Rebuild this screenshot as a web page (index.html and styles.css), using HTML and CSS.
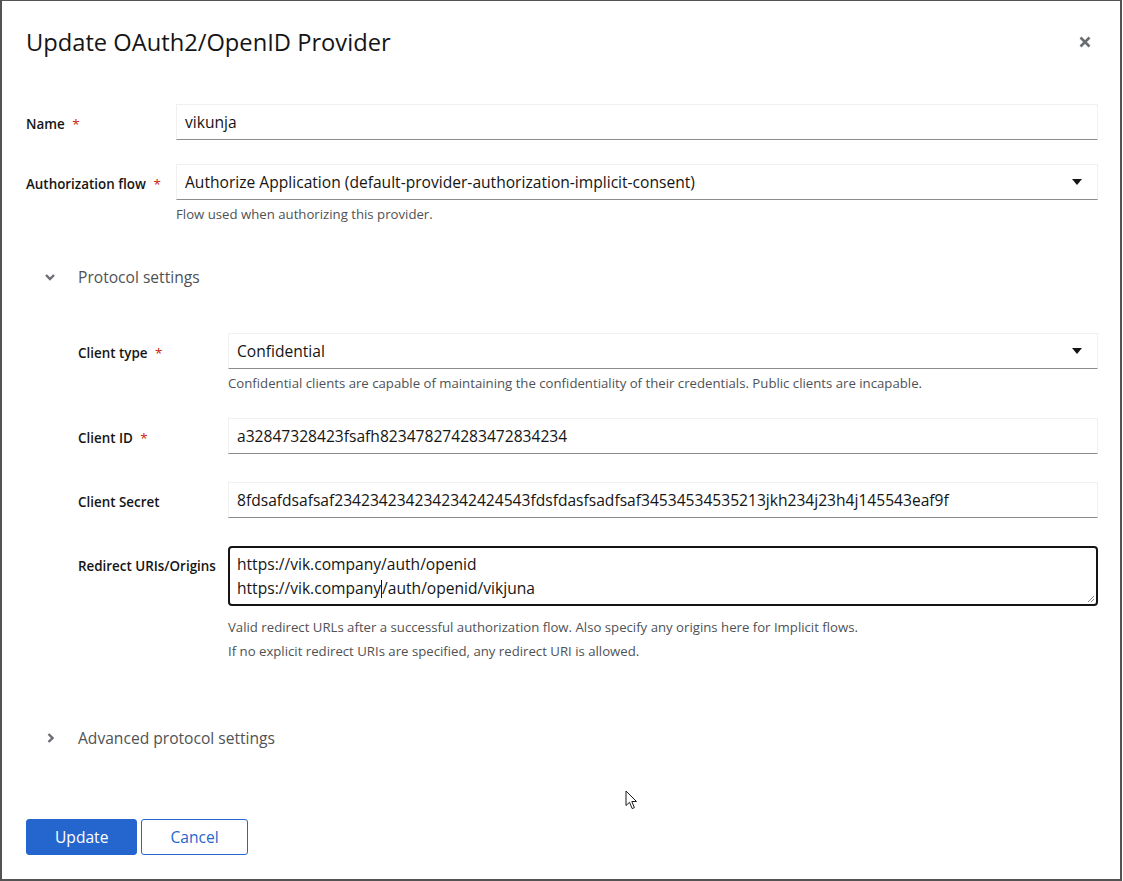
FILE: index.html
```html
<!DOCTYPE html>
<html lang="en">
<head>
<meta charset="utf-8">
<title>Update OAuth2/OpenID Provider</title>
<link rel="stylesheet" href="styles.css">
</head>
<body>
<div class="modal">
  <header class="modal-header">
    <h1 class="modal-title">Update OAuth2/OpenID Provider</h1>
    <button class="close" aria-label="Close">
      <svg width="12" height="12" viewBox="0 0 12 12"><path d="M1.5 1.5 L10.5 10.5 M10.5 1.5 L1.5 10.5" stroke="#6a6e73" stroke-width="2.6" stroke-linecap="butt"/></svg>
    </button>
  </header>

  <form class="form">
    <div class="group">
      <label class="label">Name <span class="req">*</span></label>
      <div class="control">
        <div class="input">vikunja</div>
      </div>
    </div>

    <div class="group">
      <label class="label">Authorization flow <span class="req">*</span></label>
      <div class="control">
        <div class="input select">
          <span>Authorize Application (default-provider-authorization-implicit-consent)</span>
          <svg class="caret" width="10" height="6" viewBox="0 0 10 6"><path d="M0 0 H10 L5 6 Z" fill="#151515"/></svg>
        </div>
        <p class="helper">Flow used when authorizing this provider.</p>
      </div>
    </div>

    <section class="expandable">
      <div class="toggle">
        <span class="toggle-icon">
          <svg width="10" height="7" viewBox="0 0 10 7"><path d="M1 1 L5 5 L9 1" fill="none" stroke="#6a6e73" stroke-width="2.4"/></svg>
        </span>
        <span class="toggle-text">Protocol settings</span>
      </div>
      <div class="expand-content">
        <div class="group">
          <label class="label">Client type <span class="req">*</span></label>
          <div class="control">
            <div class="input select">
              <span>Confidential</span>
              <svg class="caret" width="10" height="6" viewBox="0 0 10 6"><path d="M0 0 H10 L5 6 Z" fill="#151515"/></svg>
            </div>
            <p class="helper">Confidential clients are capable of maintaining the confidentiality of their credentials. Public clients are incapable.</p>
          </div>
        </div>

        <div class="group">
          <label class="label">Client ID <span class="req">*</span></label>
          <div class="control">
            <div class="input">a32847328423fsafh823478274283472834234</div>
          </div>
        </div>

        <div class="group gap-lg">
          <label class="label">Client Secret</label>
          <div class="control">
            <div class="input">8fdsafdsafsaf2342342342342342424543fdsfdasfsadfsaf34534534535213jkh234j23h4j145543eaf9f</div>
          </div>
        </div>

        <div class="group gap-lg">
          <label class="label">Redirect URIs/Origins</label>
          <div class="control">
            <div class="textarea">
              <div>https://vik.company/auth/openid</div>
              <div>https://vik.company<span class="text-caret"></span>/auth/openid/vikjuna</div>
              <svg class="grip" width="9" height="9" viewBox="0 0 9 9"><path d="M8 2 L2 8 M8 5 L5 8" stroke="#8a8d90" stroke-width="1"/></svg>
            </div>
            <p class="helper helper-first">Valid redirect URLs after a successful authorization flow. Also specify any origins here for Implicit flows.</p>
            <p class="helper helper-next">If no explicit redirect URIs are specified, any redirect URI is allowed.</p>
          </div>
        </div>
      </div>
    </section>

    <section class="expandable advanced">
      <div class="toggle">
        <span class="toggle-icon right">
          <svg width="7" height="10" viewBox="0 0 7 10"><path d="M1.5 1 L5.5 5 L1.5 9" fill="none" stroke="#6a6e73" stroke-width="2.4"/></svg>
        </span>
        <span class="toggle-text">Advanced protocol settings</span>
      </div>
    </section>
  </form>

  <footer class="modal-footer">
    <button class="btn btn-primary">Update</button>
    <button class="btn btn-secondary">Cancel</button>
  </footer>

  <svg class="pointer" width="14" height="21" viewBox="0 0 14 21"><path d="M1 1 L1 15.5 L4.5 12.3 L7.2 18.6 L9.4 17.6 L6.8 11.5 L11.5 11.5 Z" fill="#fff" stroke="#1a1a1a" stroke-width="1" stroke-linejoin="miter"/></svg>
</div>
</body>
</html>
```

FILE: styles.css
```css
* { box-sizing: border-box; }

html, body {
  margin: 0;
  padding: 0;
  background: #ffffff;
}

body {
  font-family: "Open Sans", "Liberation Sans", Arial, sans-serif;
  color: #151515;
  width: 1123px;
  height: 881px;
  overflow: hidden;
}

.modal {
  position: relative;
  width: 1122px;
  height: 881px;
  border: 2px solid #535353;
  border-top-width: 1px;
  background: #fff;
  padding: 0 22px 0 24px;
}

.modal-header {
  display: flex;
  align-items: center;
  justify-content: space-between;
  padding-top: 25px;
}

.modal-title {
  margin: 0;
  font-size: 23.7px;
  line-height: 32px;
  font-weight: 400;
  color: #151515;
}

.close {
  border: 0;
  background: transparent;
  padding: 0;
  margin-right: 7px;
  width: 12px;
  height: 12px;
  display: flex;
}

.form {
  margin: 46px 0 0;
}

.group {
  display: flex;
  align-items: flex-start;
  margin-top: 24px;
}

.group:first-child { margin-top: 0; }
.group.gap-lg { margin-top: 28px; }

.label {
  width: 150px;
  flex: none;
  font-size: 13.4px;
  font-weight: 600;
  line-height: 21px;
  padding-top: 10px;
  color: #151515;
}

.req {
  color: #c9190b;
  margin-left: 4px;
  font-weight: 400;
}

.control {
  flex: 1;
  min-width: 0;
}

.input {
  height: 36px;
  border: 1px solid #f0f0f0;
  border-bottom-color: #8a8d90;
  padding: 0 8px;
  font-size: 15.6px;
  line-height: 34px;
  white-space: nowrap;
  overflow: hidden;
  color: #151515;
}

.select {
  display: flex;
  align-items: center;
  justify-content: space-between;
  padding-right: 15px;
}

.caret { flex: none; }

.helper {
  margin: 4px 0 0;
  font-size: 13.2px;
  line-height: 21px;
  color: #4f5255;
}

.helper-first { margin-top: 11px; }
.helper-next { margin-top: 3px; }

.expandable .toggle {
  display: flex;
  align-items: center;
  margin-top: 32px;
  padding: 8px 0;
  line-height: 24px;
}

.toggle-icon {
  width: 52px;
  flex: none;
  display: flex;
  align-items: center;
  padding-left: 19px;
}

.toggle-icon.right { padding-left: 21px; }

.toggle-text {
  font-size: 15.6px;
  color: #4f5255;
}

.expand-content {
  padding-left: 52px;
  margin-top: 36px;
}

.textarea {
  position: relative;
  height: 60px;
  border: 2px solid #151515;
  border-radius: 4px;
  padding: 4px 7px;
  font-size: 15.6px;
  line-height: 24px;
  color: #151515;
}

.text-caret {
  display: inline-block;
  width: 1px;
  height: 18px;
  background: #151515;
  vertical-align: -4px;
}

.grip {
  position: absolute;
  right: 1px;
  bottom: 1px;
}

.advanced .toggle { margin-top: 56px; }

.modal-footer {
  display: flex;
  gap: 4px;
  margin-top: 61px;
}

.btn {
  height: 36px;
  font-family: inherit;
  font-size: 15.6px;
  border-radius: 3px;
  padding: 0 28px;
  cursor: pointer;
}

.btn-primary {
  background: #2566ce;
  border: 1px solid #2566ce;
  color: #fff;
}

.btn-secondary {
  background: #fff;
  border: 1px solid #2566ce;
  color: #2566ce;
}

.pointer {
  position: absolute;
  left: 623px;
  top: 789px;
}
```
